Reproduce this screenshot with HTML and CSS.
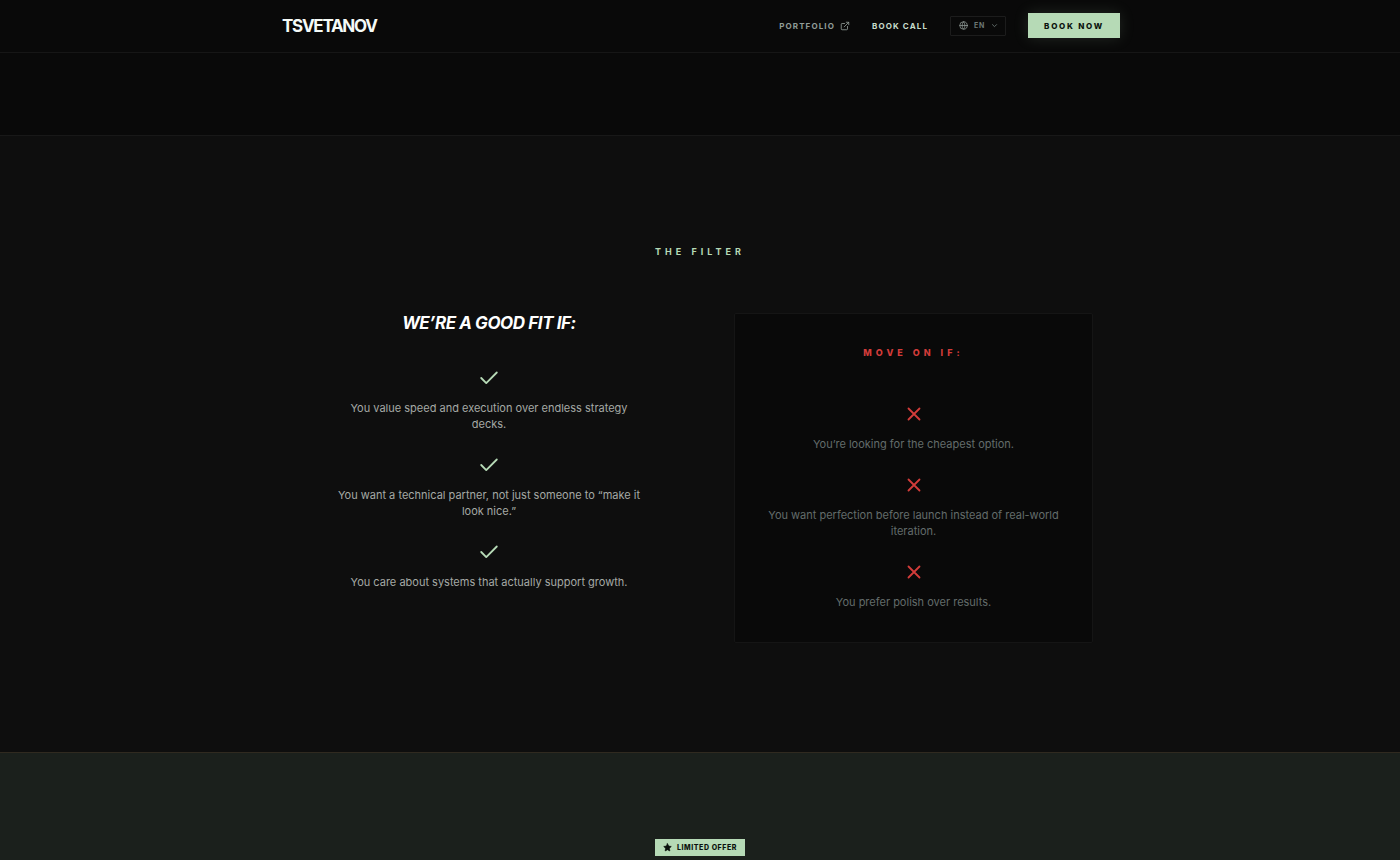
FILE: index.html
```html
<!DOCTYPE html>
<html lang="en">
<head>
<meta charset="utf-8">
<meta name="viewport" content="width=device-width, initial-scale=1">
<title>Tsvetanov</title>
<link rel="stylesheet" href="styles.css">
</head>
<body>
<header class="site-header">
  <div class="header-inner">
    <a class="logo" href="#">TSVETANOV</a>
    <nav class="nav">
      <a class="nav-link" href="#">PORTFOLIO
        <svg class="icon-external" viewBox="0 0 24 24" aria-hidden="true"><path d="M15 3h6v6M10 14 21 3M18 13v6a2 2 0 0 1-2 2H5a2 2 0 0 1-2-2V8a2 2 0 0 1 2-2h6"/></svg>
      </a>
      <a class="nav-link nav-link-accent" href="#">BOOK CALL</a>
      <button class="language" type="button" aria-label="Language: EN">
        <svg class="icon-globe" viewBox="0 0 24 24" aria-hidden="true"><circle cx="12" cy="12" r="10"/><path d="M2 12h20M12 2a14.5 14.5 0 0 0 0 20 14.5 14.5 0 0 0 0-20"/></svg>
        <span>EN</span>
        <svg class="icon-chevron" viewBox="0 0 24 24" aria-hidden="true"><path d="m5 9 7 7 7-7"/></svg>
      </button>
      <button class="book-now" type="button">BOOK NOW</button>
    </nav>
  </div>
</header>
<main>
  <section class="spacer"></section>
  <section class="filter">
    <h2 class="eyebrow">THE FILTER</h2>
    <div class="filter-grid">
      <div class="fit">
        <h3 class="fit-title">WE’RE A GOOD FIT IF:</h3>
        <ul class="points">
          <li><svg class="mark" viewBox="0 0 24 24" aria-hidden="true"><path d="M20.500 6 9 17.500 3.500 12"/></svg><p>You value speed and execution over endless strategy decks.</p></li>
          <li><svg class="mark" viewBox="0 0 24 24" aria-hidden="true"><path d="M20.500 6 9 17.500 3.500 12"/></svg><p>You want a technical partner, not just someone to “make it look nice.”</p></li>
          <li><svg class="mark" viewBox="0 0 24 24" aria-hidden="true"><path d="M20.500 6 9 17.500 3.500 12"/></svg><p>You care about systems that actually support growth.</p></li>
        </ul>
      </div>
      <div class="move-on">
        <h3 class="move-on-title">MOVE ON IF:</h3>
        <ul class="points">
          <li><svg class="mark" viewBox="0 0 24 24" aria-hidden="true"><path d="M18 6 6 18M6 6l12 12"/></svg><p>You’re looking for the cheapest option.</p></li>
          <li><svg class="mark" viewBox="0 0 24 24" aria-hidden="true"><path d="M18 6 6 18M6 6l12 12"/></svg><p>You want perfection before launch instead of real-world iteration.</p></li>
          <li><svg class="mark" viewBox="0 0 24 24" aria-hidden="true"><path d="M18 6 6 18M6 6l12 12"/></svg><p>You prefer polish over results.</p></li>
        </ul>
      </div>
    </div>
  </section>
  <section class="offer">
    <div class="badge">
      <svg class="icon-star" viewBox="0 0 24 24" aria-hidden="true"><path d="m12 2 3.100 6.300 6.900 1-5 4.900 1.200 6.900-6.200-3.300-6.200 3.300L7 14.200 2 9.300l6.900-1z"/></svg>
      <span>LIMITED OFFER</span>
    </div>
  </section>
</main>
</body>
</html>
```

FILE: styles.css
```css
* { box-sizing: border-box; }
body {
  margin: 0;
  background: #090909;
  color: #fff;
  font-family: Inter, "Liberation Sans", sans-serif;
}
h2, h3, p, ul { margin: 0; padding: 0; }
ul { list-style: none; }
svg {
  display: block;
  flex: none;
  fill: none;
  stroke: currentColor;
  stroke-width: 2;
  stroke-linecap: round;
  stroke-linejoin: round;
}
a { color: inherit; text-decoration: none; }
button { font-family: inherit; cursor: pointer; }

.site-header {
  background: #090909;
  border-bottom: 1px solid #161616;
}
.header-inner {
  max-width: 840px;
  margin: 0 auto;
  padding: 13px 0 14px 2px;
  display: flex;
  align-items: center;
  justify-content: space-between;
}
.logo {
  font-size: 17px;
  line-height: 24px;
  font-weight: 700;
  letter-spacing: -0.075em;
  color: #f5faf7;
}
.nav { display: flex; align-items: center; gap: 22px; }
.nav-link {
  display: flex;
  align-items: center;
  gap: 5px;
  font-size: 8px;
  line-height: 12px;
  font-weight: 700;
  letter-spacing: 0.14em;
  color: #919c98;
}
.nav-link-accent { color: #c6dccb; }
.icon-external { width: 10px; height: 10px; }
.language {
  display: flex;
  align-items: center;
  gap: 6px;
  height: 20px;
  padding: 0 7px 0 8px;
  border: 1px solid #1c1c1c;
  border-radius: 1px;
  background: transparent;
  color: #6c7875;
  font-size: 7px;
  font-weight: 700;
  letter-spacing: 0.1em;
}
.icon-globe { width: 9px; height: 9px; color: #919c98; }
.icon-chevron { width: 7px; height: 7px; stroke-width: 3; }
.book-now {
  height: 25px;
  padding: 0 16px;
  border: 0;
  background: #b6dab6;
  color: #0b120d;
  font-size: 8px;
  font-weight: 800;
  letter-spacing: 0.22em;
  box-shadow: 0 0 15px rgba(182, 218, 182, 0.15);
}

.spacer { height: 82px; }
.filter {
  padding: 109px 24px;
  background: #0e0e0e;
  border-top: 1px solid #181818;
}
.eyebrow {
  font-size: 9px;
  line-height: 14px;
  font-weight: 700;
  letter-spacing: 4px;
  text-align: center;
  color: #b6dab6;
}
.filter-grid {
  max-width: 786px;
  margin: 54px auto 0;
  display: grid;
  grid-template-columns: 364fr 359fr;
  gap: 63px;
}
.fit { padding: 0 28px; text-align: center; color: #a5a9a5; }
.fit-title {
  margin-bottom: 34px;
  font-size: 17px;
  line-height: 20px;
  font-weight: 700;
  font-style: italic;
  letter-spacing: -0.025em;
  color: #fff;
}
.points { display: grid; gap: 22px; }
.points li { display: grid; justify-items: center; gap: 11px; }
.points p { font-size: 11px; line-height: 16px; }
.mark { width: 22px; height: 22px; color: #b6dab6; }
.move-on {
  padding: 32px;
  border: 1px solid #151515;
  border-radius: 2px;
  background: #090909;
  text-align: center;
  color: #636c6b;
}
.move-on-title {
  margin-bottom: 43px;
  font-size: 9px;
  line-height: 14px;
  font-weight: 800;
  letter-spacing: 4px;
  color: #d23c3a;
}
.move-on .mark { color: #d23c3a; }

.offer {
  min-height: 108px;
  padding-top: 86px;
  border-top: 1px solid #302a20;
  background: #1b201c;
  display: flex;
  justify-content: center;
  align-items: flex-start;
}
.badge {
  display: flex;
  align-items: center;
  gap: 5px;
  height: 17px;
  padding: 0 8px;
  background: #b6dab6;
  color: #0b120d;
  font-size: 7px;
  font-weight: 800;
  letter-spacing: 0.08em;
}
.icon-star { width: 9px; height: 9px; fill: currentColor; }
```
